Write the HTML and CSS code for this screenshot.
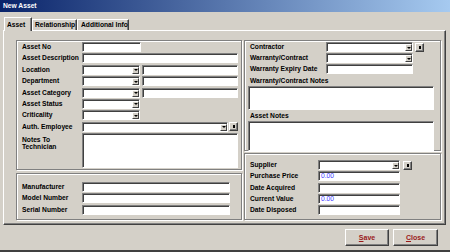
FILE: index.html
```html
<!DOCTYPE html>
<html lang="en">
<head>
    <meta charset="UTF-8">
    <title>New Asset</title>
    <link rel="stylesheet" href="styles.css">
</head>
<body>
    <div class="window">
        <div class="titlebar">New Asset</div>

        <div class="tabs">
            <div class="tab tab-asset active">Asset</div>
            <div class="tab tab-rel">Relationship</div>
            <div class="tab tab-info">Additional Info</div>
        </div>

        <div class="panel">
            <div class="col col-left">
                <div class="group group-main">
                    <div class="row"><span class="label">Asset No</span><span class="input w-no"></span></div>
                    <div class="row"><span class="label">Asset Description</span><span class="input w-full"></span></div>
                    <div class="row"><span class="label">Location</span><span class="combo w-combo"><span class="drop"></span></span><span class="input w-side"></span></div>
                    <div class="row"><span class="label">Department</span><span class="combo w-combo"><span class="drop"></span></span><span class="input w-side"></span></div>
                    <div class="row"><span class="label">Asset Category</span><span class="combo w-combo"><span class="drop"></span></span><span class="input w-side"></span></div>
                    <div class="row"><span class="label">Asset Status</span><span class="combo w-combo"><span class="drop"></span></span></div>
                    <div class="row"><span class="label">Criticality</span><span class="combo w-combo"><span class="drop"></span></span></div>
                    <div class="row"><span class="label">Auth. Employee</span><span class="combo w-emp"><span class="drop"></span></span><span class="dots"></span></div>
                    <div class="row row-notes"><span class="label">Notes To<br>Technician</span><span class="input area w-full"></span></div>
                </div>

                <div class="group group-make">
                    <div class="row"><span class="label">Manufacturer</span><span class="input w-make"></span></div>
                    <div class="row"><span class="label">Model Number</span><span class="input w-make"></span></div>
                    <div class="row"><span class="label">Serial Number</span><span class="input w-make"></span></div>
                </div>
            </div>

            <div class="col col-right">
                <div class="group group-contract">
                    <div class="row"><span class="label">Contractor</span><span class="combo w-con"><span class="drop"></span></span><span class="dots"></span></div>
                    <div class="row"><span class="label">Warranty/Contract</span><span class="combo w-con"><span class="drop"></span></span></div>
                    <div class="row"><span class="label">Warranty Expiry Date</span><span class="input w-con"></span></div>
                    <div class="caption caption-first">Warranty/Contract Notes</div>
                    <span class="input area notes-warranty"></span>
                    <div class="caption">Asset Notes</div>
                    <span class="input area notes-asset"></span>
                </div>

                <div class="group group-supply">
                    <div class="row"><span class="label">Supplier</span><span class="combo w-sup"><span class="drop"></span></span><span class="dots"></span></div>
                    <div class="row"><span class="label">Purchase Price</span><span class="input w-sup"><span class="value">0.00</span></span></div>
                    <div class="row"><span class="label">Date Acquired</span><span class="input w-sup"></span></div>
                    <div class="row"><span class="label">Current Value</span><span class="input w-sup"><span class="value">0.00</span></span></div>
                    <div class="row"><span class="label">Date Disposed</span><span class="input w-sup"></span></div>
                </div>
            </div>
        </div>

        <div class="footer">
            <button class="btn"><u>S</u>ave</button>
            <button class="btn"><u>C</u>lose</button>
        </div>
    </div>
</body>
</html>
```

FILE: styles.css
```css
* {
    box-sizing: border-box;
}

body {
    margin: 0;
    background-color: #d4d0c8;
    font-family: "Liberation Sans", Arial, sans-serif;
    font-size: 6.7px;
    font-weight: bold;
    color: #000;
}

.window {
    width: 450px;
    height: 252px;
    display: flex;
    flex-direction: column;
    background-color: #d4d0c8;
    border-bottom: 2px solid #404040;
    overflow: hidden;
}

.titlebar {
    height: 12px;
    line-height: 12px;
    padding-left: 3px;
    color: #fff;
    background: linear-gradient(to right, #0a246a, #a6caf0);
}

/* tabs */
.tabs {
    height: 18px;
    display: flex;
    align-items: flex-end;
    padding-left: 4px;
}

.tab {
    height: 11px;
    line-height: 10px;
    padding-left: 2px;
    border: 1px solid;
    border-color: #fff #404040 transparent #fff;
    border-bottom: none;
    box-shadow: inset -1px 0 #808080;
    white-space: nowrap;
}

.tab.active {
    height: 14px;
    line-height: 13px;
    margin-bottom: -1px;
    position: relative;
    z-index: 1;
    background-color: #d4d0c8;
}

.tab-asset { width: 28px; }
.tab-rel { width: 45px; }
.tab-info { width: 52px; padding-left: 3px; }

/* panel */
.panel {
    margin-left: 3px;
    width: 443px;
    height: 195px;
    display: flex;
    gap: 2px;
    padding: 9px 4px 0 12px;
    border: 1px solid;
    border-color: #fff #404040 #404040 #fff;
    box-shadow: inset -1px -1px #808080;
}

.col {
    display: flex;
    flex-direction: column;
}

.col-left { width: 226px; gap: 3px; }
.col-right { width: 197px; gap: 2px; }

.group {
    display: flex;
    flex-direction: column;
    border: 1px solid #808080;
    box-shadow: inset 1px 1px #fff, 1px 1px #fff;
    padding-left: 5px;
}

.group-main { height: 130px; padding-top: 1px; gap: 1.4px; }
.group-make { height: 47px; padding-top: 8px; gap: 1.4px; }
.group-contract { height: 111px; padding-top: 1px; gap: 1px; }
.group-supply { height: 67px; padding-top: 6px; gap: 1.3px; }

.row {
    display: flex;
    align-items: center;
    height: 10px;
    gap: 2px;
    white-space: nowrap;
}

.label {
    flex: none;
    width: 58px;
    line-height: 10px;
}

.group-contract .label { width: 74px; }
.group-supply .label { width: 66px; }

.row-notes {
    height: 35px;
    align-items: flex-start;
}

.row-notes .label {
    line-height: 7px;
    padding-top: 3px;
}

/* fields */
.input,
.combo {
    display: block;
    flex: none;
    height: 10px;
    background-color: #fff;
    border: 1px solid;
    border-color: #808080 #fff #fff #808080;
    box-shadow: inset 1px 1px #404040;
}

.area { height: 35px; }

.combo {
    display: flex;
    justify-content: flex-end;
    padding-top: 1px;
}

.drop {
    width: 7px;
    height: 7px;
    display: flex;
    align-items: center;
    justify-content: center;
    background-color: #d4d0c8;
    border: 1px solid;
    border-color: #fff #404040 #404040 #fff;
}

.drop::after {
    content: "";
    border-left: 2px solid transparent;
    border-right: 2px solid transparent;
    border-top: 2px solid #000;
}

.dots {
    flex: none;
    width: 9px;
    height: 9px;
    display: flex;
    align-items: center;
    justify-content: center;
    background-color: #d4d0c8;
    border: 1px solid;
    border-color: #fff #404040 #404040 #fff;
    box-shadow: inset -1px -1px #808080;
}

.dots::after {
    content: "";
    width: 2px;
    height: 3px;
    background-color: #000;
}

.w-no { width: 59px; }
.w-full { width: 156px; }
.w-combo { width: 58px; }
.w-side { width: 96px; }
.w-emp { width: 146px; margin-right: -1px; }
.w-make { width: 148px; }
.w-con { width: 87px; }
.w-sup { width: 82px; }
.group-supply .dots { margin-left: 1px; }

.value {
    display: block;
    padding-left: 2px;
    line-height: 8px;
    font-weight: normal;
    color: #3c3cff;
}

.caption {
    height: 9px;
    line-height: 9px;
}

.caption-first {
    height: 10px;
    line-height: 11px;
}

.notes-warranty,
.notes-asset {
    width: 186px;
    margin-left: -2px;
}

.notes-warranty { height: 24px; }
.notes-asset { height: 30px; }

/* footer buttons */
.footer {
    flex: 1;
    display: flex;
    justify-content: flex-end;
    align-items: flex-start;
    gap: 4px;
    padding: 4px 12px 0 0;
}

.btn {
    width: 44px;
    height: 17px;
    padding: 0;
    font-family: "Liberation Sans", Arial, sans-serif;
    font-size: 7px;
    font-weight: bold;
    color: #9a1a1a;
    background-color: #d4d0c8;
    border: 1px solid;
    border-color: #fff #404040 #404040 #fff;
    box-shadow: inset -1px -1px #808080;
}

.btn + .btn { width: 45px; }
```
